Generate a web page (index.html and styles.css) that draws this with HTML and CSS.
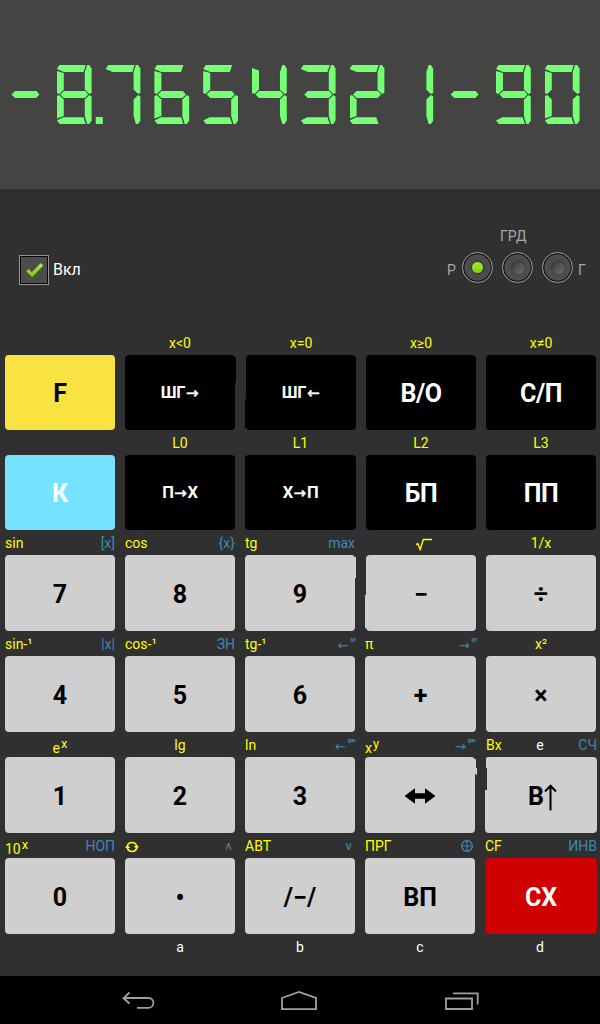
FILE: index.html
```html
<!DOCTYPE html>
<html lang="ru">
<head>
<meta charset="utf-8">
<title>Калькулятор</title>
<link rel="stylesheet" href="styles.css">
</head>
<body>
<div class="display" id="display" role="img" aria-label="-8.7654321-90"></div>

<div class="panel">
  <div class="power">
    <span class="checkbox"><svg width="20" height="18" viewBox="0 0 20 18"><defs><linearGradient id="tick" x1="0" y1="0" x2="0" y2="1"><stop offset="0" stop-color="#b3ef3c"/><stop offset="1" stop-color="#72cc0c"/></linearGradient></defs><path d="M.9 9.3 3.4 6.8 7 9.8 15.6.8 18.6 3.4 7.2 15.6z" fill="url(#tick)" stroke="#3a3a3a" stroke-width=".5"/></svg></span>
    <span class="power-text">Вкл</span>
  </div>
  <div class="angle">
    <span class="angle-top">ГРД</span>
    <div class="radios">
      <span class="angle-left">Р</span>
      <span class="radio on"></span><span class="radio"></span><span class="radio"></span>
      <span class="angle-right">Г</span>
    </div>
  </div>
</div>

<div class="pad">
  <div class="row r1">
    <div class="cell"><div class="lab"></div><div class="key yellow">F</div></div>
    <div class="cell"><div class="lab mid"><span>x&lt;0</span></div><div class="key black small s-a">ШГ<b class="arr">→</b></div></div>
    <div class="cell"><div class="lab mid"><span>x=0</span></div><div class="key black small s-b">ШГ<b class="arr">←</b></div></div>
    <div class="cell"><div class="lab mid"><span>x≥0</span></div><div class="key black">В/О</div></div>
    <div class="cell"><div class="lab mid"><span>x≠0</span></div><div class="key black">С/П</div></div>
  </div>
  <div class="row r2">
    <div class="cell"><div class="lab"></div><div class="key cyan">К</div></div>
    <div class="cell"><div class="lab mid"><span>L0</span></div><div class="key black small">П<b class="arr">→</b>Х</div></div>
    <div class="cell"><div class="lab mid"><span>L1</span></div><div class="key black small">Х<b class="arr">→</b>П</div></div>
    <div class="cell"><div class="lab mid"><span>L2</span></div><div class="key black">БП</div></div>
    <div class="cell"><div class="lab mid"><span>L3</span></div><div class="key black">ПП</div></div>
  </div>
  <div class="row r3">
    <div class="cell"><div class="lab"><span>sin</span><span class="blue">[x]</span></div><div class="key">7</div></div>
    <div class="cell"><div class="lab"><span>cos</span><span class="blue">{x}</span></div><div class="key">8</div></div>
    <div class="cell"><div class="lab"><span>tg</span><span class="blue">max</span></div><div class="key s-c">9</div></div>
    <div class="cell"><div class="lab mid"><svg class="root" width="16" height="13" viewBox="0 0 16 13"><path d="M0 6.5 1.8 5.6 4.2 11.5 7.3 1.5H16" fill="none" stroke="#ff0" stroke-width="1.4"/></svg></div><div class="key s-d">−</div></div>
    <div class="cell"><div class="lab mid"><span>1/x</span></div><div class="key">÷</div></div>
  </div>
  <div class="row r4">
    <div class="cell"><div class="lab"><span>sin-¹</span><span class="blue">|x|</span></div><div class="key">4</div></div>
    <div class="cell"><div class="lab"><span>cos-¹</span><span class="blue">ЗН</span></div><div class="key">5</div></div>
    <div class="cell"><div class="lab"><span>tg-¹</span><span class="blue deg"><b>←</b><i>°'</i></span></div><div class="key">6</div></div>
    <div class="cell"><div class="lab"><span>π</span><span class="blue deg"><b>→</b><i>°'</i></span></div><div class="key">+</div></div>
    <div class="cell"><div class="lab mid"><span>x²</span></div><div class="key">×</div></div>
  </div>
  <div class="row r5">
    <div class="cell"><div class="lab mid"><span class="pow">e<i>x</i></span></div><div class="key">1</div></div>
    <div class="cell"><div class="lab mid"><span>lg</span></div><div class="key">2</div></div>
    <div class="cell"><div class="lab"><span>ln</span><span class="blue deg"><b>←</b><i>°'"</i></span></div><div class="key">3</div></div>
    <div class="cell"><div class="lab"><span class="pow">x<i>y</i></span><span class="blue deg"><b>→</b><i>°'"</i></span></div><div class="key s-e"><svg class="swap" width="32" height="18" viewBox="0 0 32 18"><path d="M.5 9 11 1.2V6.2H21V1.2L31.5 9 21 16.8V11.8H11V16.8z"/></svg></div></div>
    <div class="cell"><div class="lab"><span class="bx">Bx</span><span class="white">e</span><span class="blue">СЧ</span></div><div class="key s-f"><span class="enter">В</span><svg class="up" width="13" height="27" viewBox="0 0 13 27"><path d="M6.5 26.5V2M1 7.5 6.5 1.7 12 7.5" fill="none" stroke="#000" stroke-width="2"/></svg></div></div>
  </div>
  <div class="row r6">
    <div class="cell"><div class="lab"><span class="pow">10<i>x</i></span><span class="blue">НОП</span></div><div class="key">0</div></div>
    <div class="cell"><div class="lab"><svg class="cycle" width="14" height="12" viewBox="0 0 14 12"><g fill="none" stroke="#ff0" stroke-width="1.6"><path d="M2.2 5.2A4.9 4.9 0 0 1 11.7 5.2M11.8 6.8A4.9 4.9 0 0 1 2.3 6.8"/></g><path d="M8.8 5H14L11.5 8zM0 7H5.2L2.5 4z" fill="#ff0"/></svg><span class="blue caret">∧</span></div><div class="key">•</div></div>
    <div class="cell"><div class="lab"><span>АВТ</span><span class="blue caret">∨</span></div><div class="key">/−/</div></div>
    <div class="cell"><div class="lab"><span>ПРГ</span><svg class="plus" width="12" height="12" viewBox="0 0 12 12"><path d="M6 .7a5.3 5.3 0 1 0 .01 0zM6 .7V11.3M.7 6H11.3" fill="none" stroke="#3d88b8" stroke-width="1.2"/></svg></div><div class="key">ВП</div></div>
    <div class="cell"><div class="lab"><span>CF</span><span class="blue">ИНВ</span></div><div class="key red">СХ</div></div>
  </div>
  <div class="row r6">
    <div></div><div class="lab mid white">a</div><div class="lab mid white">b</div><div class="lab mid white">c</div><div class="lab mid white last">d</div>
  </div>
</div>

<div class="nav">
  <svg width="34" height="20" viewBox="0 0 34 20"><path d="M7.5 1.5 1.5 7.2 7.5 12.5M2 7H26.5A4.8 4.8 0 0 1 26.5 16.8H15"/></svg>
  <svg width="36" height="20" viewBox="0 0 36 20"><path d="M1 7 18 1 35 7V18.2H1z"/></svg>
  <svg width="34" height="20" viewBox="0 0 34 20"><path d="M1 7.5H27V18H1zM8 2.3H32.7V13.5"/></svg>
</div>
<script src="display.js"></script>
</body>
</html>
```

FILE: styles.css
```css
* { box-sizing: border-box; }
body {
  margin: 0; width: 600px; height: 1024px; overflow: hidden;
  display: flex; flex-direction: column;
  background: #303030; color: #fff;
  font: 14px/25px Roboto, "Noto Sans", "DejaVu Sans", sans-serif;
}
.display {
  height: 189px; background: #444542;
  padding: 65px 0 0 8px; display: flex; gap: 13.8px;
}
.digit { position: relative; width: 35px; height: 59px; flex: none; }
.digit i { position: absolute; left: 0; top: 0; width: 42px; height: 59px; background: #75ff75; }
.a { clip-path: polygon(0 4px, 2.5px 0, 29px 0, 26.7px 7px, 7px 7px); }
.b { clip-path: polygon(30.3px 0, 32.5px 0, 34.8px 3.5px, 34.8px 28px, 32.5px 29px, 28px 24.5px, 28px 7px); }
.c { clip-path: polygon(32.5px 30px, 34.8px 31.5px, 34.8px 55.5px, 32.5px 59px, 30.3px 59px, 28px 51px, 28px 34.5px); }
.d { clip-path: polygon(0 55.5px, 6.5px 52.3px, 26.7px 52.3px, 29px 59px, 3px 59px); }
.e { clip-path: polygon(0 31px, 2.5px 30px, 7px 34.5px, 7px 51px, 0 53.5px); }
.f { clip-path: polygon(0 6px, 7px 8px, 7px 24.5px, 2.5px 29px, 0 28px); }
.h { clip-path: polygon(0 3px, 7px 5.5px, 7px 24.5px, 2.5px 29px, 0 28px); }
.g { clip-path: polygon(3.5px 29.5px, 7px 26px, 28.5px 26px, 31.5px 29.5px, 28px 33px, 7px 33px); }
.p { clip-path: polygon(39px 52px, 46px 52px, 46px 59px, 39px 59px); }
.digit .p { width: 46px; }

.panel {
  height: 141px; display: flex; justify-content: space-between;
  padding: 35px 14px 0 19px;
}
.power { display: flex; height: 30px; margin-top: 31px; align-items: center; gap: 4px; }
.checkbox {
  width: 30px; height: 30px; border: 1px solid #939393; padding: 6px 0 0 5px;
  background: #4b4c4b; box-shadow: inset 0 0 0 1px #080808; line-height: 0;
}
.power-text { font-size: 16px; line-height: 24px; margin-top: -1px; }
.angle { color: #a9a9a9; display: flex; flex-direction: column; width: 139px; }
.angle-top { padding-left: 53px; height: 28px; }
.radios { display: flex; }
.angle-left { width: 15px; padding-top: 6px; }
.angle-right { padding-top: 6px; margin-left: -4px; }
.radio {
  width: 31px; height: 31px; margin-right: 9px; border-radius: 50%;
  border: 1px solid #a0a0a0; flex: none;
  background: radial-gradient(circle closest-side, #3c3c3c 6px, #4a4b4a 7.5px, #4c4d4c 12.6px, #141414 13.6px);
  display: grid; place-items: center;
}
.radio::after {
  content: ""; width: 12px; height: 12px; border-radius: 50%;
  background: linear-gradient(135deg, #383838, #707170); margin: 1px 0 0 1px;
}
.radio.on::after { width: 11px; height: 11px; background: linear-gradient(#a2ef2c, #7cd010); margin: 0; }

.row { display: grid; column-gap: 10px; padding-left: 5px; justify-content: start; }
.r1 { grid-template-columns: 110px 110px 110px 110px 110px; }
.r1 .cell:nth-child(n+3) { transform: translateX(1px); }
.r2 { grid-template-columns: 110px 110px 111px 110px 110px; }
.r3 { grid-template-columns: 110px 110px 110px 111px 110px; }
.r4 { grid-template-columns: 110px 110px 110px 111px 110px; }
.r5 { grid-template-columns: 110px 110px 110px 110px 112px; }
.r6 { grid-template-columns: 110px 110px 110px 110px 112px; }
.r3 .cell:nth-child(4) { padding-left: 1px; }
.lab { height: 25px; display: flex; justify-content: space-between; color: #ff0; padding-top: 1px; white-space: nowrap; }
.r5 .lab, .r4 .lab, .r6 .lab { padding-top: 0.5px; }
.lab.mid { justify-content: center; }
.lab.last { padding-right: 2px; }
.bx { padding-left: 1px; }
.blue { color: #3d88b8; }
.white, .lab.white { color: #fff; }
.key {
  position: relative; height: 76px; border-radius: 4px; background: #cfcfcf; color: #000;
  display: flex; align-items: center; justify-content: center;
  font-size: 25px; font-weight: 700; padding-top: 2px;
}
.r1 .key, .r2 .key { height: 75px; }
.key.black { background: #000; color: #fff; letter-spacing: -.5px; }
.key.yellow { background: #f8e343; }
.key.cyan { background: #75e3ff; color: #fff; }
.key.red { background: #cf0000; color: #fff; }
.key.small { font-size: 16.5px; padding-top: 0; letter-spacing: -.2px; }
.arr { font: 400 15px/20px "DejaVu Sans", sans-serif; -webkit-text-stroke: .5px #fff; width: 14px; text-align: center; margin-top: 1px; letter-spacing: 0; }
.swap { margin-right: 1px; }
.enter { margin-left: 3px; }
.up { margin: 2px 0 0 0; }
.root { margin: 7px 0 0 6px; }
.cycle { margin-top: 7px; }
.plus { margin: 6px 2px 0 0; }
.caret { padding-right: 3px; font: 12px/24px "DejaVu Sans", sans-serif; margin-right: -1px; }
.deg { display: flex; }
.deg b { font: 400 13px/25px "DejaVu Sans", sans-serif; padding-top: 1px; }
.deg i { font: 500 13px/23px Roboto, sans-serif; padding-left: 1px; letter-spacing: -.9px; }
.pow { padding-top: 3px; display: flex; }
.pow i { font: 400 13px/17px Roboto, sans-serif; padding-left: 1px; margin-top: -1px; }

/* one-pixel steps on key edges */
.s-a::after, .s-b::after, .s-c::after, .s-d::after, .s-e::after, .s-f::after {
  content: ""; position: absolute; width: 1px; background: inherit;
}
.s-a::after { left: 110px; top: 2px; height: 26px; }
.s-b::after { left: -1px; top: 44px; height: 29px; }
.s-c::after { left: 110px; top: 2px; height: 21px; }
.s-d::after { left: -1px; top: 40px; height: 33px; }
.s-e::after { left: 110px; top: 2px; height: 15px; }
.s-e::before { content: ""; position: absolute; left: 111px; top: 11px; width: 1px; height: 7px; background: #cfcfcf; }
.s-f::before { content: ""; position: absolute; left: 0; top: 0; width: 1px; height: 33px; background: #303030; }
.s-f::after { left: 1px; top: 11px; height: 22px; background: #303030; }

.nav {
  height: 48px; margin-top: auto; background: #000;
  display: flex; justify-content: space-between; padding: 14.5px 121px 0 121.5px;
}
.nav svg { fill: none; stroke: #a0a0a0; stroke-width: 1.8; }
.nav svg:nth-child(2) { margin-left: -2px; }
```

FILE: display.js
```js
// Segments lit for each symbol; "h" is the tall upper-left segment, "p" the decimal point.
const SEGMENTS = {
  '-': 'g', '8.': 'abcdefgp', '7': 'abc', '6': 'acdefg', '5': 'acdfg', '4': 'bchg',
  '3': 'abcdg', '2': 'abdeg', '1': 'bc', '9': 'abcdfg', '0': 'abcdef'
};
const display = document.getElementById('display');
for (const symbol of ['-', '8.', '7', '6', '5', '4', '3', '2', '1', '-', '9', '0']) {
  const digit = document.createElement('span');
  digit.className = 'digit';
  for (const name of SEGMENTS[symbol]) {
    const segment = document.createElement('i');
    segment.className = name;
    digit.append(segment);
  }
  display.append(digit);
}
```
